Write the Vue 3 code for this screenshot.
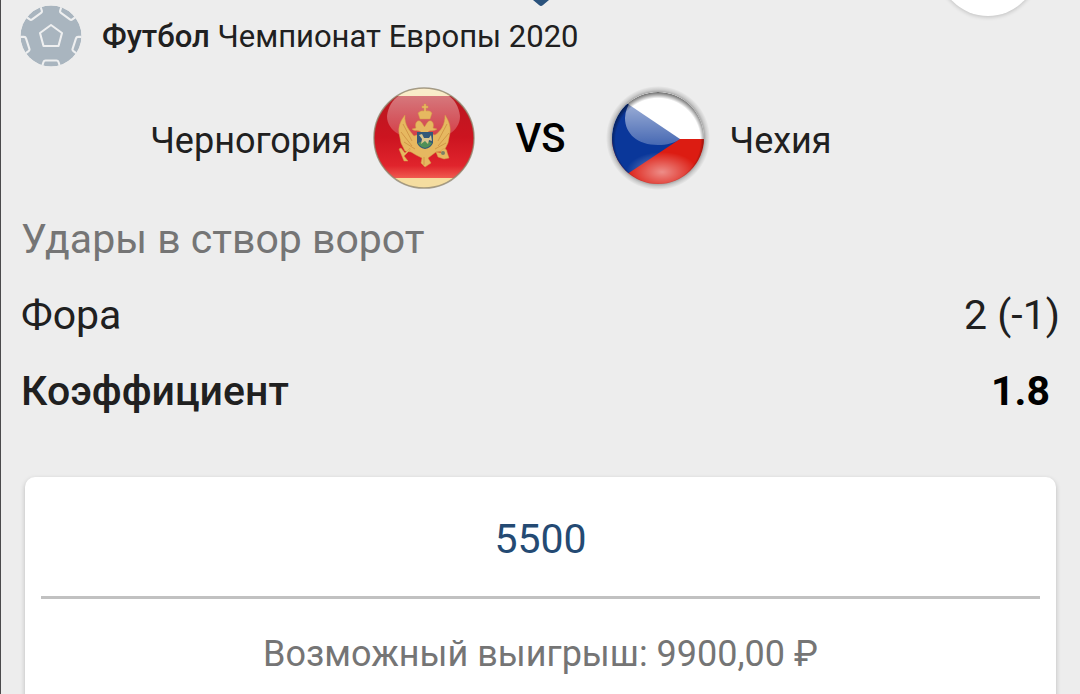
<script setup>
import { ref } from 'vue'

const stake = ref('5500')
const seams = [0, 72, 144, 216, 288]
</script>

<template>
  <main class="coupon">
    <svg class="pointer" viewBox="0 0 16 6" aria-hidden="true"><path d="M0 0H16L10 5Q8 7 6 5Z" fill="#2a527c" /></svg>
    <button class="round" type="button" aria-label="Закрыть"></button>

    <header class="event">
      <svg class="ball" viewBox="0 0 62 62" aria-hidden="true">
        <defs><clipPath id="ball-clip"><circle cx="31" cy="31" r="30.5" /></clipPath></defs>
        <g clip-path="url(#ball-clip)">
          <circle cx="31" cy="31" r="30.5" fill="#a9b5bf" />
          <g fill="none" stroke="#eeeff0" stroke-width="2.1" stroke-linejoin="round">
            <path d="M31 20L42 28L38.500 41H23.500L20 28Z" />
            <path v-for="angle in seams" :key="angle" :transform="`rotate(${angle} 31 31)`" d="M21.500 63L23.500 57Q24 55.500 25.500 55.500H36.500Q38 55.500 38.500 57L40.500 63" />
          </g>
        </g>
      </svg>
      <p class="league"><b>Футбол</b> Чемпионат Европы 2020</p>
    </header>

    <section class="match">
      <span class="team home">Черногория</span>
      <svg class="flag" viewBox="0 0 104 104" role="img" aria-label="Флаг Черногории">
        <defs>
          <clipPath id="me-clip"><circle cx="52" cy="52" r="50" /></clipPath>
          <linearGradient id="me-red" x1="0" y1="0" x2="0" y2="1">
            <stop offset="0" stop-color="#ba1820" /><stop offset=".5" stop-color="#cc1420" /><stop offset=".85" stop-color="#e0242c" /><stop offset="1" stop-color="#f05a50" />
          </linearGradient>
          <linearGradient id="me-gloss" x1="0" y1="0" x2="0" y2="1">
            <stop offset="0" stop-color="#fff" stop-opacity=".46" /><stop offset="1" stop-color="#fff" stop-opacity=".16" />
          </linearGradient>
        </defs>
        <g clip-path="url(#me-clip)">
          <rect width="104" height="104" fill="#f5dda0" />
          <rect y="10" width="104" height="82" fill="url(#me-red)" />
          <path d="M15 30C17 12 33 2 52 2S86 12 88 30C88 46 71 54 52 54S15 46 15 30Z" fill="url(#me-gloss)" />
          <g fill="#e6b860" stroke="#d59a48" stroke-width=".5" stroke-linejoin="round">
            <path d="M50 47C47 43 42 46 40 43L44 42C42 36 47 32 50 37L52.500 41L55 37C58 32 63 36 61 42L65 43C62 46 58 43 55 47L63 49C69 45 73 39 73 29C77 35 79 41 78 47L76 57L72 65L64 66L60 69L56 72L59 77L53 81L49 77L50 72L44 69L39 66L33 65L29 57L27 47C26 40 29 34 33 29C32 39 38 45 42 50Z" />
            <path d="M48 33L46 27Q49 24 52 25V22H50V20H52V18H54V20H56V22H54V25Q58 24 60 27L58 33Z" />
            <path d="M38 64L32 70L36 75L32 75L27 63L29 62L33 67L38 62ZM64 66L69 67C68 62 75 61 75 66L77 72L72 73L66 71Z" />
          </g>
          <path d="M31 38L40 55M29 46L40 60M32 56L43 63M75 38L66 55M77 47L66 60M74 57L63 63M52 71V79" stroke="#c98a3c" stroke-width=".7" fill="none" />
          <path d="M45 46H61V57Q59 62 53 63Q47 62 45 57Z" fill="#345878" />
          <path d="M46 57Q53 53 60 57Q58 61 53 62Q48 61 46 57Z" fill="#4f9058" />
          <path d="M47 49L50 48L52 52H57L59 49L60 55L57 54L56 58L53 55L49 58L50 53Z" fill="#d9c58d" />
          <circle cx="71" cy="67" r="2" fill="#7d8066" />
        </g>
        <circle cx="52" cy="52" r="50" fill="none" stroke="#8b806a" stroke-opacity=".75" stroke-width="1.500" />
      </svg>
      <span class="versus">VS</span>
      <svg class="flag" viewBox="0 0 104 104" role="img" aria-label="Флаг Чехии">
        <defs>
          <clipPath id="cz-clip"><circle cx="52" cy="52" r="46" /></clipPath>
          <radialGradient id="cz-edge" cx=".5" cy=".53" r=".53">
            <stop offset=".87" stop-color="#000" stop-opacity="0" /><stop offset="1" stop-color="#000" stop-opacity=".6" />
          </radialGradient>
          <linearGradient id="cz-gloss" x1="0" y1="0" x2="0" y2="1">
            <stop offset="0" stop-color="#fff" stop-opacity=".7" /><stop offset="1" stop-color="#fff" stop-opacity=".25" />
          </linearGradient>
          <radialGradient id="cz-glow"><stop offset="0" stop-color="#fff" stop-opacity=".5" /><stop offset="1" stop-color="#fff" stop-opacity="0" /></radialGradient>
          <radialGradient id="cz-shadow"><stop offset=".86" stop-color="#000" stop-opacity=".38" /><stop offset=".93" stop-color="#000" stop-opacity=".14" /><stop offset="1" stop-color="#000" stop-opacity="0" /></radialGradient>
        </defs>
        <circle cx="52" cy="52" r="52" fill="url(#cz-shadow)" />
        <g clip-path="url(#cz-clip)">
          <rect width="104" height="53" fill="#fff" />
          <rect y="53" width="104" height="51" fill="#dc1c12" />
          <path d="M-30 -17L74 53L-30 122Z" fill="#0a379a" />
          <ellipse cx="56" cy="86" rx="36" ry="20" fill="url(#cz-glow)" />
          <path d="M19 32C20 14 33 5 52 5S84 14 86 32V53H74C68 57 61 59 52 59C32 59 19 48 19 32Z" fill="url(#cz-gloss)" />
          <circle cx="52" cy="52" r="46" fill="url(#cz-edge)" />
        </g>
      </svg>
      <span class="team">Чехия</span>
    </section>

    <h1 class="market">Удары в створ ворот</h1>
    <dl class="terms">
      <div class="term"><dt>Фора</dt><dd>2 (-1)</dd></div>
      <div class="term odds"><dt>Коэффициент</dt><dd>1.8</dd></div>
    </dl>

    <form class="card" @submit.prevent>
      <input v-model="stake" class="stake" type="text" inputmode="numeric" aria-label="Сумма ставки">
      <p class="payout">Возможный выигрыш: 9900,00 ₽</p>
    </form>
  </main>
</template>

<style>
html,
body {
  background: #ededed;
}
</style>

<style scoped>
.coupon {
  box-sizing: border-box;
  position: relative;
  height: 100vh;
  overflow: hidden;
  border-left: 1px solid #4b4a4c;
  background: #ededed;
  color: #202020;
  font-family: Roboto, "Noto Sans", sans-serif;
}
.pointer {
  position: absolute;
  top: 0;
  left: 50%;
  width: 16px;
  height: 6px;
  margin-left: -8px;
}
.round {
  position: absolute;
  top: -84px;
  right: 42px;
  width: 100px;
  height: 100px;
  padding: 0;
  border: 0;
  border-radius: 50%;
  background: #fff;
  box-shadow: 0 1px 4px rgba(0, 0, 0, 0.2);
}
.event {
  display: flex;
  align-items: center;
  gap: 20px;
  padding: 5px 20px 0 19px;
}
.ball {
  width: 62px;
  height: 62px;
}
.league {
  margin: 0;
  padding-top: 2px;
  font-size: 31px;
  line-height: 40px;
}
.league b {
  font-weight: 500;
}
.match {
  display: grid;
  grid-template-columns: 1fr 104px 90px 104px 1fr;
  column-gap: 20px;
  align-items: center;
  margin-top: 18px;
  height: 106px;
}
.flag {
  width: 104px;
  height: 104px;
}
.team {
  padding-top: 6px;
  font-size: 36px;
  line-height: 44px;
}
.home {
  text-align: right;
}
.versus {
  padding-top: 2px;
  color: #000;
  font-size: 40px;
  font-weight: 500;
  line-height: 48px;
  text-align: center;
}
.market {
  margin: 20px 20px 0;
  color: #757575;
  font-size: 41px;
  font-weight: 400;
  line-height: 56px;
}
.terms {
  margin: 10px 20px 0;
}
.term {
  display: flex;
  justify-content: space-between;
  height: 76px;
  align-items: center;
  font-size: 41px;
  line-height: 56px;
}
.term dd {
  margin: 0;
}
.odds {
  font-weight: 500;
}
.odds dd {
  padding-right: 10px;
  color: #000;
  font-weight: 700;
}
.card {
  margin: 48px 24px 0;
  padding: 0 16px 40px;
  border-radius: 10px;
  background: #fff;
  box-shadow: 0 2px 5px rgba(0, 0, 0, 0.22);
}
.stake {
  display: block;
  box-sizing: border-box;
  width: 100%;
  height: 122px;
  padding: 4px 0 0;
  border: 0;
  border-bottom: 3px solid #c1c1c1;
  border-radius: 0;
  outline: 0;
  background: transparent;
  color: #244a73;
  font: 400 41px/48px Roboto, "Noto Sans", sans-serif;
  text-align: center;
}
.payout {
  margin: 33px 0 0;
  color: #757575;
  font-size: 36px;
  line-height: 44px;
  text-align: center;
}
</style>
